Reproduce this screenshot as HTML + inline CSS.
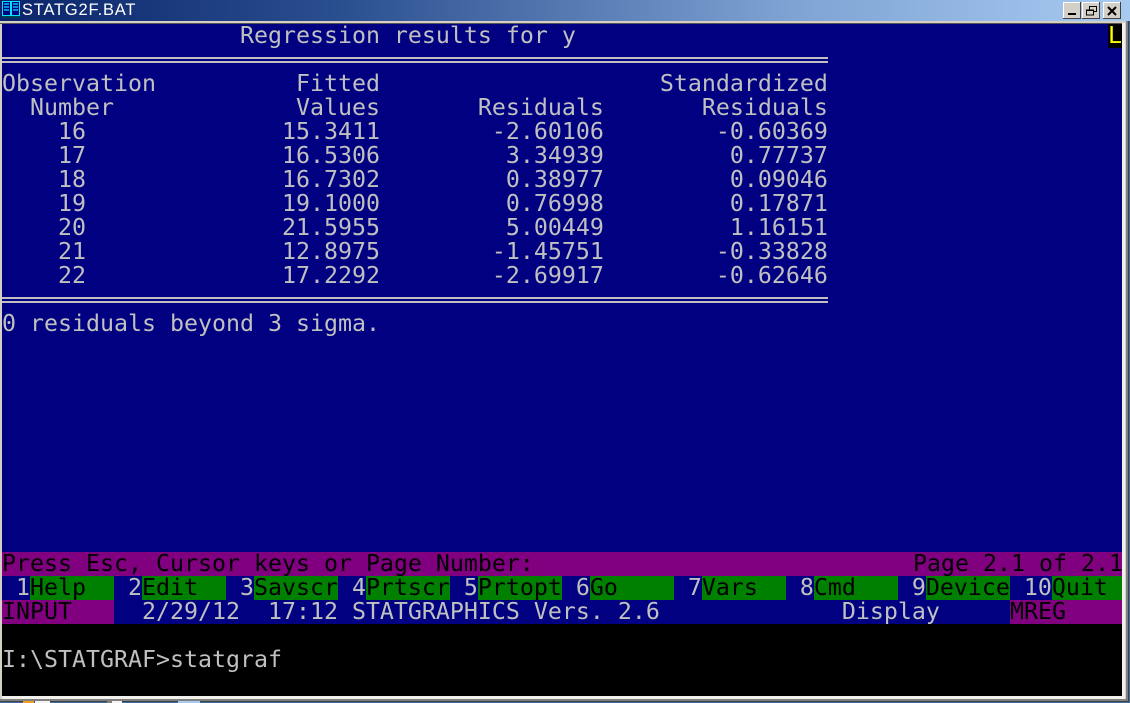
<!DOCTYPE html>
<html><head><meta charset="utf-8"><style>
html,body{margin:0;padding:0;background:#3a6ea5;width:1130px;height:703px;overflow:hidden}
#t{position:absolute;left:0;top:0;width:1130px;height:21px;background:linear-gradient(90deg,#0a246a 0%,#2a4f8f 30%,#7fa3d3 70%,#a6caf0 100%)}
#tt{position:absolute;left:22px;top:0;font:16.5px/21px "Liberation Sans",sans-serif;letter-spacing:.8px;color:#fff;white-space:pre}
#fo{position:absolute;left:0;top:21px;width:1129px;height:681px;background:#404040}
#fg{position:absolute;left:0;top:21px;width:1128px;height:680px;background:#808080}
#f{position:absolute;left:0;top:21px;width:1126px;height:678px;background:#d4d0c8}
#c{position:absolute;left:2px;top:24px;width:1120px;height:672px;background:#000}
#w1{position:absolute;left:1122px;top:23px;width:3px;height:676px;background:#f2f0ea}
#w2{position:absolute;left:2px;top:696px;width:1123px;height:3px;background:#f2f0ea}
#d1{position:absolute;left:0;top:23px;width:1122px;height:1px;background:#555}
.b{position:absolute}
.r{position:absolute;left:2px;font:23.25px/24px "DejaVu Sans Mono",monospace;color:#c0c0c0;white-space:pre;letter-spacing:0}
.k{color:#000}
.l{position:absolute;left:2px;width:826px;height:2px;background:#c0c0c0}
.btn{position:absolute;top:2px;width:18px;height:17px;background:#d4d0c8;box-shadow:inset -1px -1px 0 #404040,inset 1px 1px 0 #fff}
</style></head><body>
<div id="t"></div>
<svg style="position:absolute;left:2px;top:1px" width="18" height="18" viewBox="0 0 18 18"><rect x="0" y="0" width="18" height="15" fill="#00e5ff"/><rect x="1" y="1" width="7" height="13" fill="#000080"/><rect x="10" y="1" width="7" height="13" fill="#000080"/><path d="M2 3h5M2 6h5M2 9h5M11 3h5M11 6h5M11 9h5" stroke="#00e5ff" stroke-width="1.2"/><rect x="0" y="15" width="18" height="2" fill="#004050"/></svg>
<div id="tt">STATG2F.BAT</div>
<div class="btn" style="left:1063px"><svg width="18" height="17"><rect x="5" y="11" width="8" height="2" fill="#000"/></svg></div>
<div class="btn" style="left:1082px"><svg width="18" height="17"><path d="M4.5 8.5h7v4.5h-7zM7.5 8V4.5h7v5h-3" fill="none" stroke="#000"/><path d="M4 8h8M7 4.5h8" stroke="#000"/></svg></div>
<div class="btn" style="left:1103px"><svg width="18" height="17"><path d="M5 5l8 8M13 5l-8 8" stroke="#000" stroke-width="2"/></svg></div>
<div id="fo"></div><div id="fg"></div><div id="f"></div>
<div id="d1"></div>
<div id="c"></div>
<div id="w1"></div><div id="w2"></div>
<div class="b" style="left:23px;top:701px;width:11px;height:2px;background:#f0a020"></div>
<div class="b" style="left:35px;top:701px;width:15px;height:2px;background:#f4f4f4"></div>
<div class="b" style="left:107px;top:701px;width:5px;height:2px;background:#808080"></div>
<div class="b" style="left:112px;top:701px;width:10px;height:2px;background:#f4f4f4"></div>
<div class="b" style="left:178px;top:701px;width:22px;height:2px;background:#a6caf0"></div>
<div class="b" style="left:2px;top:24px;width:1120px;height:528px;background:#000080"></div>
<div class="b" style="left:1108px;top:24px;width:14px;height:24px;background:#000"></div>
<div class="r" style="left:1108px;top:24px;color:#ffff00">L</div>
<div class="l" style="top:57px"></div><div class="l" style="top:61px"></div>
<div class="l" style="top:297px"></div><div class="l" style="top:301px"></div>
<div class="r" style="top:24px">                 Regression results for y</div>
<div class="r" style="top:72px">Observation          Fitted                    Standardized</div>
<div class="r" style="top:96px">  Number             Values       Residuals       Residuals</div>
<div class="r" style="top:120px">    16              15.3411        -2.60106        -0.60369</div>
<div class="r" style="top:144px">    17              16.5306         3.34939         0.77737</div>
<div class="r" style="top:168px">    18              16.7302         0.38977         0.09046</div>
<div class="r" style="top:192px">    19              19.1000         0.76998         0.17871</div>
<div class="r" style="top:216px">    20              21.5955         5.00449         1.16151</div>
<div class="r" style="top:240px">    21              12.8975        -1.45751        -0.33828</div>
<div class="r" style="top:264px">    22              17.2292        -2.69917        -0.62646</div>
<div class="r" style="top:312px">0 residuals beyond 3 sigma.</div>
<div class="b" style="left:2px;top:552px;width:1120px;height:24px;background:#800080"></div>
<div class="b" style="left:2px;top:576px;width:1120px;height:24px;background:#000080"></div>
<div class="b" style="left:2px;top:600px;width:1120px;height:24px;background:#000080"></div>
<div class="b" style="left:30px;top:576px;width:84px;height:24px;background:#008000"></div>
<div class="b" style="left:142px;top:576px;width:84px;height:24px;background:#008000"></div>
<div class="b" style="left:254px;top:576px;width:84px;height:24px;background:#008000"></div>
<div class="b" style="left:366px;top:576px;width:84px;height:24px;background:#008000"></div>
<div class="b" style="left:478px;top:576px;width:84px;height:24px;background:#008000"></div>
<div class="b" style="left:590px;top:576px;width:84px;height:24px;background:#008000"></div>
<div class="b" style="left:702px;top:576px;width:84px;height:24px;background:#008000"></div>
<div class="b" style="left:814px;top:576px;width:84px;height:24px;background:#008000"></div>
<div class="b" style="left:926px;top:576px;width:84px;height:24px;background:#008000"></div>
<div class="b" style="left:1052px;top:576px;width:70px;height:24px;background:#008000"></div>
<div class="b" style="left:2px;top:600px;width:112px;height:24px;background:#800080"></div>
<div class="b" style="left:1010px;top:600px;width:112px;height:24px;background:#800080"></div>
<div class="r k" style="top:552px">Press Esc, Cursor keys or Page Number:</div>
<div class="r k" style="top:552px;left:913px">Page 2.1 of 2.1</div>
<div class="r" style="top:576px"> 1       2       3       4       5       6       7       8       9       10</div>
<div class="r k" style="top:576px">  Help    Edit    Savscr  Prtscr  Prtopt  Go      Vars    Cmd     Device   Quit</div>
<div class="r k" style="top:600px">INPUT</div>
<div class="r" style="top:600px">          2/29/12  17:12 STATGRAPHICS Vers. 2.6             Display</div>
<div class="r k" style="top:600px;left:1010px">MREG</div>
<div class="r" style="top:648px">I:\STATGRAF&gt;statgraf</div>
</body></html>
